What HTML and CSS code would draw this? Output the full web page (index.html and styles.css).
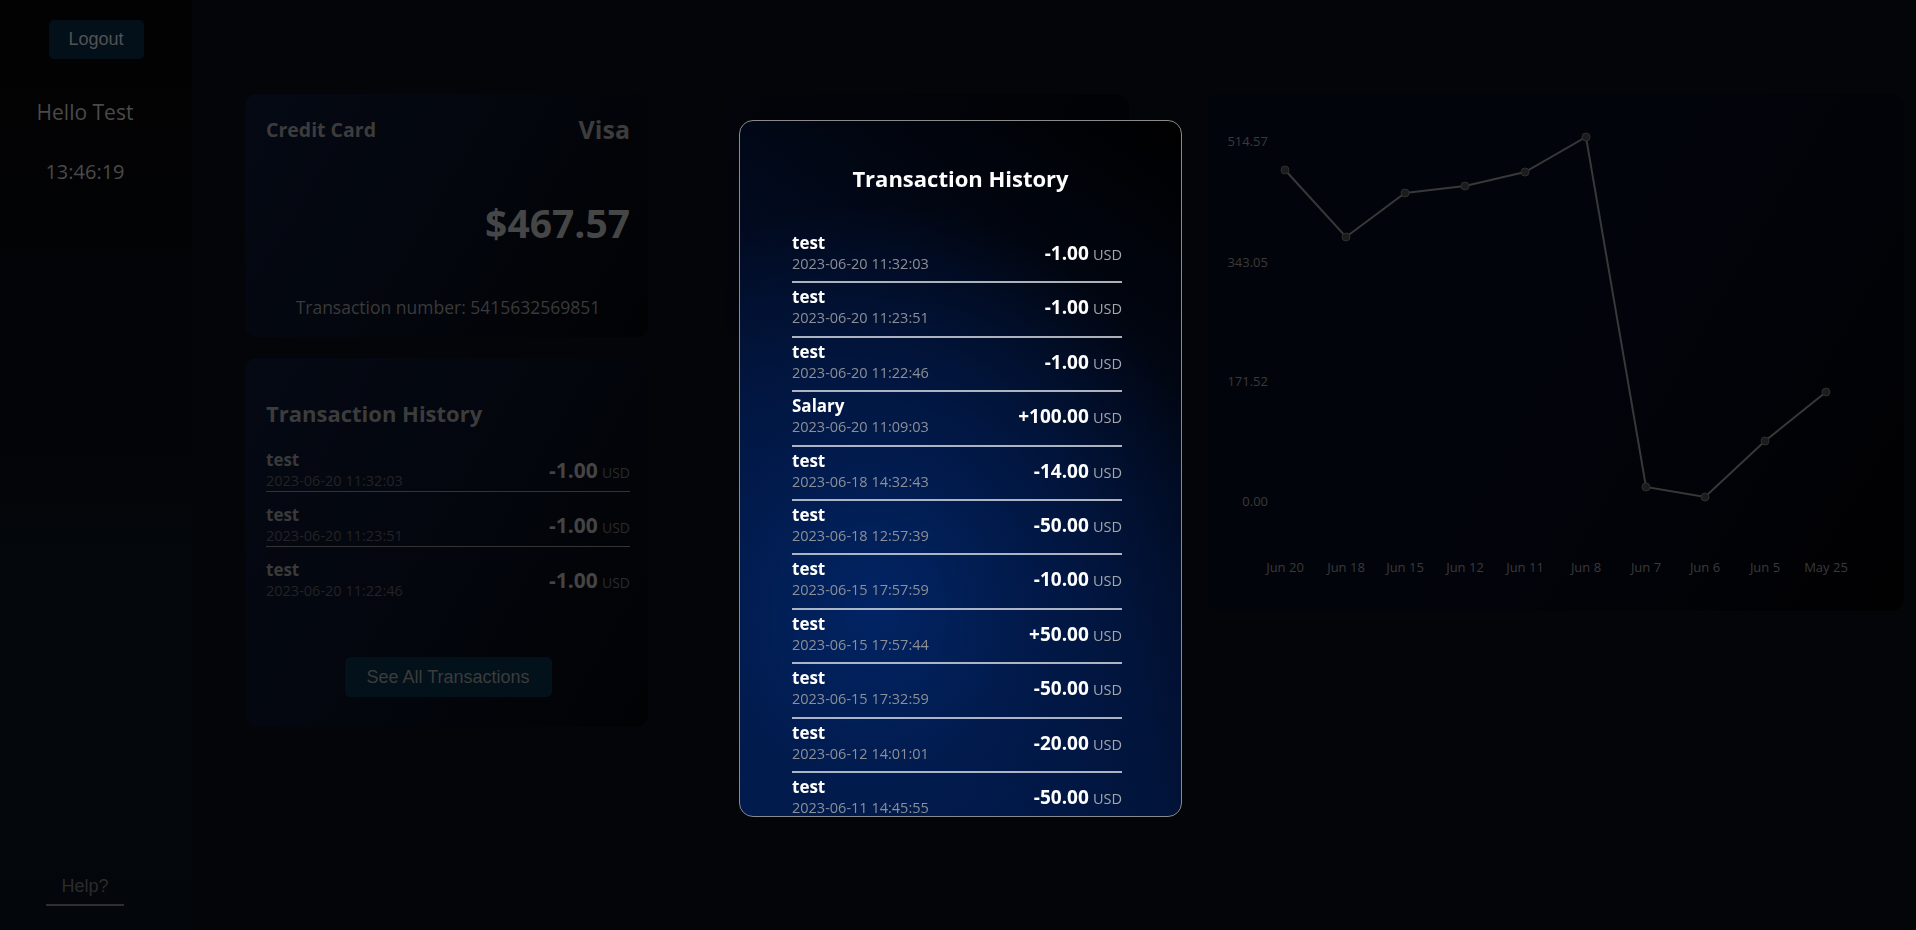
FILE: index.html
```html
<!DOCTYPE html>
<html lang="en">
<head>
<meta charset="utf-8">
<title>Dashboard</title>
<link rel="stylesheet" href="styles.css">
</head>
<body>
<div class="app">
  <aside class="sidebar">
    <button class="logout">Logout</button>
    <div class="hello">Hello Test</div>
    <div class="clock">13:46:19</div>
    <div class="spacer"></div>
    <a class="help">Help?</a>
  </aside>
  <main class="main">
    <section class="card credit">
      <div class="credit-head">
        <span class="credit-title">Credit Card</span>
        <span class="credit-brand">Visa</span>
      </div>
      <div class="credit-amount">$467.57</div>
      <div class="credit-number">Transaction number: 5415632569851</div>
    </section>
    <section class="card middle"></section>
    <section class="card chart">
      <svg class="chart-svg" viewBox="0 0 697 517" width="697" height="517">
        <g class="ylabels">
          <text x="61" y="52">514.57</text>
          <text x="61" y="173">343.05</text>
          <text x="61" y="292">171.52</text>
          <text x="61" y="412">0.00</text>
        </g>
        <g class="xlabels">
          <text x="78" y="478">Jun 20</text>
          <text x="139" y="478">Jun 18</text>
          <text x="198" y="478">Jun 15</text>
          <text x="258" y="478">Jun 12</text>
          <text x="318" y="478">Jun 11</text>
          <text x="379" y="478">Jun 8</text>
          <text x="439" y="478">Jun 7</text>
          <text x="498" y="478">Jun 6</text>
          <text x="558" y="478">Jun 5</text>
          <text x="619" y="478">May 25</text>
        </g>
        <polyline class="line" points="78,76 139,143 198,99 258,92 318,78 379,43 439,393 498,403 558,347 619,298"/>
        <g class="dots">
          <circle cx="78" cy="76" r="4"/>
          <circle cx="139" cy="143" r="4"/>
          <circle cx="198" cy="99" r="4"/>
          <circle cx="258" cy="92" r="4"/>
          <circle cx="318" cy="78" r="4"/>
          <circle cx="379" cy="43" r="4"/>
          <circle cx="439" cy="393" r="4"/>
          <circle cx="498" cy="403" r="4"/>
          <circle cx="558" cy="347" r="4"/>
          <circle cx="619" cy="298" r="4"/>
        </g>
      </svg>
    </section>
    <section class="card history">
      <h2 class="history-title">Transaction History</h2>
      <div class="hrow">
        <div class="hinfo"><div class="hname">test</div><div class="hdate">2023-06-20 11:32:03</div></div>
        <div class="hamt"><b>-1.00</b> <span>USD</span></div>
      </div>
      <div class="hrow">
        <div class="hinfo"><div class="hname">test</div><div class="hdate">2023-06-20 11:23:51</div></div>
        <div class="hamt"><b>-1.00</b> <span>USD</span></div>
      </div>
      <div class="hrow hrow-last">
        <div class="hinfo"><div class="hname">test</div><div class="hdate">2023-06-20 11:22:46</div></div>
        <div class="hamt"><b>-1.00</b> <span>USD</span></div>
      </div>
      <div class="see-wrap"><button class="see-all">See All Transactions</button></div>
    </section>
  </main>
</div>

<div class="backdrop">
  <div class="modal">
    <h2 class="modal-title">Transaction History</h2>
    <div class="mlist">
      <div class="mrow"><div class="minfo"><div class="mname">test</div><div class="mdate">2023-06-20 11:32:03</div></div><div class="mamt"><b>-1.00</b> <span>USD</span></div></div>
      <div class="mrow"><div class="minfo"><div class="mname">test</div><div class="mdate">2023-06-20 11:23:51</div></div><div class="mamt"><b>-1.00</b> <span>USD</span></div></div>
      <div class="mrow"><div class="minfo"><div class="mname">test</div><div class="mdate">2023-06-20 11:22:46</div></div><div class="mamt"><b>-1.00</b> <span>USD</span></div></div>
      <div class="mrow"><div class="minfo"><div class="mname">Salary</div><div class="mdate">2023-06-20 11:09:03</div></div><div class="mamt"><b>+100.00</b> <span>USD</span></div></div>
      <div class="mrow"><div class="minfo"><div class="mname">test</div><div class="mdate">2023-06-18 14:32:43</div></div><div class="mamt"><b>-14.00</b> <span>USD</span></div></div>
      <div class="mrow"><div class="minfo"><div class="mname">test</div><div class="mdate">2023-06-18 12:57:39</div></div><div class="mamt"><b>-50.00</b> <span>USD</span></div></div>
      <div class="mrow"><div class="minfo"><div class="mname">test</div><div class="mdate">2023-06-15 17:57:59</div></div><div class="mamt"><b>-10.00</b> <span>USD</span></div></div>
      <div class="mrow"><div class="minfo"><div class="mname">test</div><div class="mdate">2023-06-15 17:57:44</div></div><div class="mamt"><b>+50.00</b> <span>USD</span></div></div>
      <div class="mrow"><div class="minfo"><div class="mname">test</div><div class="mdate">2023-06-15 17:32:59</div></div><div class="mamt"><b>-50.00</b> <span>USD</span></div></div>
      <div class="mrow"><div class="minfo"><div class="mname">test</div><div class="mdate">2023-06-12 14:01:01</div></div><div class="mamt"><b>-20.00</b> <span>USD</span></div></div>
      <div class="mrow"><div class="minfo"><div class="mname">test</div><div class="mdate">2023-06-11 14:45:55</div></div><div class="mamt"><b>-50.00</b> <span>USD</span></div></div>
    </div>
  </div>
</div>
</body>
</html>
```

FILE: styles.css
```css
* { box-sizing: border-box; }
html, body { margin: 0; padding: 0; }
body {
  width: 1916px;
  height: 930px;
  overflow: hidden;
  background: #040508;
  font-family: "Open Sans", "Noto Sans", sans-serif;
  position: relative;
}
.app {
  display: flex;
  height: 930px;
}
.sidebar {
  width: 192px;
  flex: none;
  height: 930px;
  background: linear-gradient(180deg, #020202 0%, #030408 45%, #04080d 70%, #03060a 100%);
  display: flex;
  flex-direction: column;
  align-items: center;
  padding: 20px 0 24px;
}
.logout {
  width: 95px;
  height: 39px;
  border: none;
  border-radius: 5px;
  background: #03101a;
  color: #525252;
  font-family: "Liberation Sans", Arial, sans-serif;
  font-size: 18px;
  padding: 0;
}
.hello {
  margin-top: 38px;
  margin-right: 22px;
  font-size: 21px;
  line-height: 30px;
  color: #4a4a4a;
}
.clock {
  margin-top: 30px;
  margin-right: 22px;
  font-size: 20px;
  line-height: 30px;
  color: #4a4a4a;
}
.spacer { flex: 1; }
.help {
  margin-right: 22px;
  font-family: "Liberation Sans", Arial, sans-serif;
  font-size: 18px;
  line-height: 24px;
  color: #2c2c2c;
  width: 78px;
  text-align: center;
  padding-bottom: 6px;
  border-bottom: 2px solid #2e2e2e;
}
.main {
  flex: 1;
  display: grid;
  grid-template-columns: 403px 403px 697px;
  grid-template-rows: 243px 369px;
  column-gap: 78px;
  row-gap: 21px;
  padding: 94px 0 0 53px;
  align-items: start;
}
.card {
  border-radius: 12px;
  background: linear-gradient(120deg, #050914 0%, #03060d 50%, #010204 100%);
}
.credit {
  grid-column: 1;
  grid-row: 1;
  height: 243px;
  padding: 20px 18px 0 21px;
  display: flex;
  flex-direction: column;
}
.credit-head {
  display: flex;
  justify-content: space-between;
  align-items: center;
  height: 30px;
}
.credit-title { font-size: 19.5px; font-weight: 700; color: #3c3c3c; }
.credit-brand { font-size: 25px; font-weight: 700; color: #3c3c3c; }
.credit-amount {
  margin-top: 54px;
  text-align: right;
  font-size: 39px;
  line-height: 50px;
  font-weight: 700;
  color: #464646;
}
.credit-number {
  margin-top: 47px;
  text-align: center;
  font-size: 17.5px;
  line-height: 24px;
  color: #3a3a3a;
}
.middle {
  grid-column: 2;
  grid-row: 1;
  height: 243px;
  background: linear-gradient(120deg, #03050b 0%, #020308 50%, #010102 100%);
}
.chart {
  grid-column: 3;
  grid-row: 1 / span 2;
  height: 517px;
  background: linear-gradient(120deg, #02040b 0%, #02040c 50%, #010102 100%);
}
.chart-svg { display: block; }
.ylabels text {
  font-size: 13px;
  fill: #3a3a3a;
  text-anchor: end;
  font-family: "Open Sans", sans-serif;
}
.xlabels text {
  font-size: 13px;
  fill: #3a3a3a;
  text-anchor: middle;
  font-family: "Open Sans", sans-serif;
}
.line { fill: none; stroke: #383838; stroke-width: 2; }
.dots circle { fill: #1c1c1c; stroke: #2e2e2e; stroke-width: 1; }

.history {
  grid-column: 1;
  grid-row: 2;
  height: 369px;
  padding: 39px 18px 0 21px;
  display: flex;
  flex-direction: column;
}
.history-title {
  margin: 0 0 8px;
  font-size: 22px;
  line-height: 32px;
  font-weight: 700;
  color: #3c3c3c;
}
.hrow {
  display: flex;
  justify-content: space-between;
  align-items: center;
  padding-top: 12px;
  border-bottom: 1px solid #333;
}
.hrow-last { border-bottom: none; }
.hname { font-size: 17px; line-height: 22px; font-weight: 700; color: #3a3a3a; }
.hdate { font-size: 14.5px; line-height: 20px; color: #232323; }
.hamt b { font-size: 21px; font-weight: 700; color: #444; }
.hamt span { font-size: 14px; color: #2a2a2a; }
.see-wrap {
  margin-top: 56px;
  display: flex;
  justify-content: center;
}
.see-all {
  width: 207px;
  height: 40px;
  border: none;
  border-radius: 5px;
  background: #03111a;
  color: #3c3c3c;
  font-family: "Liberation Sans", Arial, sans-serif;
  font-size: 18px;
  padding: 0;
}

.backdrop {
  position: fixed;
  inset: 0;
}
.modal {
  position: absolute;
  left: 739px;
  top: 120px;
  width: 443px;
  height: 697px;
  border: 1px solid #8a8a8a;
  border-radius: 14px;
  overflow: hidden;
  background:
    radial-gradient(ellipse 90% 65% at 30% 70%, rgba(2, 36, 100, 1) 0%, rgba(1, 28, 80, 0.8) 40%, rgba(1, 20, 60, 0) 90%),
    linear-gradient(215deg, #000 0%, #01050f 22%, #010d28 50%, #011640 80%, #011a4a 100%);
  padding: 41px 59px 0 52px;
}
.modal-title {
  margin: 0 0 35px;
  text-align: center;
  font-size: 22px;
  line-height: 32px;
  font-weight: 700;
  color: #fff;
  padding-left: 7px;
}
.mrow {
  display: flex;
  justify-content: space-between;
  align-items: center;
  padding: 3px 0 7.4px;
  border-bottom: 2px solid rgba(220, 224, 232, 0.78);
}
.mname { font-size: 17px; line-height: 22px; font-weight: 700; color: #fff; }
.mdate { font-size: 14.5px; line-height: 20px; color: #8c8f96; }
.mamt b { font-size: 19px; font-weight: 700; color: #fff; }
.mamt span { font-size: 14.5px; color: #a4a7ad; }
```
